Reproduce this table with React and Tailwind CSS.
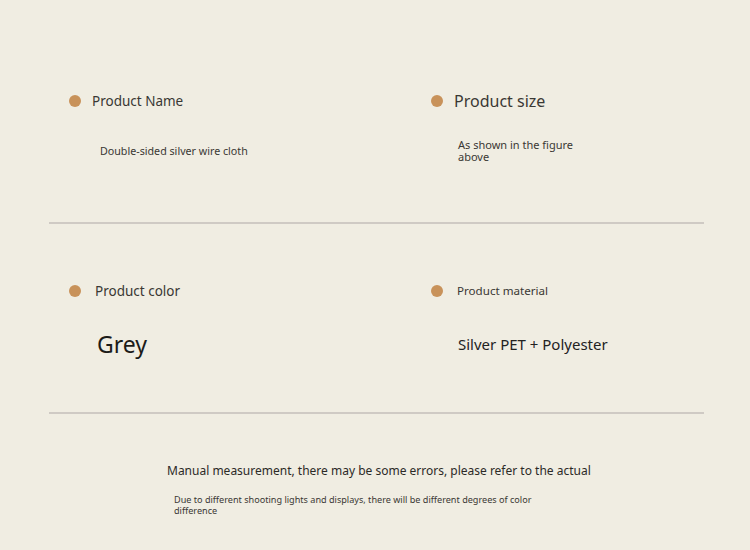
export default function App() {
  const Dot = () => (
    <span className="w-3 h-3 rounded-full bg-[#c8925a] shrink-0" />
  );

  return (
    <div className="w-[750px] h-[550px] bg-[#f0ede2] text-[#3a3834] font-['Noto_Sans',sans-serif] pl-[49px] pr-[46px] overflow-hidden">
      {/* row 1 */}
      <div className="h-[222px] flex pt-[90px]">
        <div className="w-[382px] pl-[20px]">
          <div className="flex items-center gap-[11px] h-[22px]">
            <Dot />
            <span className="text-[13.5px]">Product Name</span>
          </div>
          <p className="mt-[32px] ml-[31px] text-[10.7px] leading-[14px]">
            Double-sided silver wire cloth
          </p>
        </div>
        <div className="flex-1">
          <div className="flex items-center gap-[11px] h-[22px]">
            <Dot />
            <span className="text-[16px]">Product size</span>
          </div>
          <p className="mt-[27px] ml-[27px] w-[130px] text-[11px] leading-[12px]">
            As shown in the figure above
          </p>
        </div>
      </div>
      <div className="h-[2px] bg-[#cfcac4]" />

      {/* row 2 */}
      <div className="h-[188px] flex pt-[56px]">
        <div className="w-[382px] pl-[20px]">
          <div className="flex items-center gap-[14px] h-[22px]">
            <Dot />
            <span className="text-[13.5px]">Product color</span>
          </div>
          <p className="mt-[27px] ml-[28px] text-[23px] leading-[30px] text-[#1c1b19]">
            Grey
          </p>
        </div>
        <div className="flex-1">
          <div className="flex items-center gap-[14px] h-[22px]">
            <Dot />
            <span className="text-[11.6px]">Product material</span>
          </div>
          <p className="mt-[32px] ml-[27px] text-[15px] leading-[20px] text-[#23221f]">
            Silver PET + Polyester
          </p>
        </div>
      </div>
      <div className="h-[2px] bg-[#cfcac4]" />

      {/* notes */}
      <div className="pt-[48px] pl-[118px]">
        <p className="text-[12px] leading-[18px] text-[#2c2a27]">
          Manual measurement, there may be some errors, please refer to the actual
        </p>
        <p className="mt-[14px] ml-[7px] w-[380px] text-[9.1px] leading-[11px]">
          Due to different shooting lights and displays, there will be different degrees of color difference
        </p>
      </div>
    </div>
  );
}
